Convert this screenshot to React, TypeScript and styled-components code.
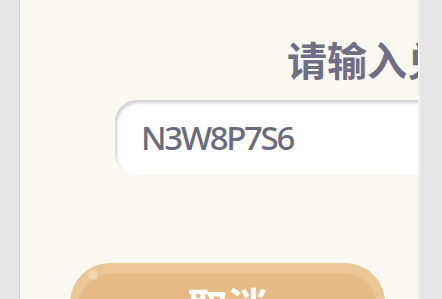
import React from "react";
import styled, { createGlobalStyle } from "styled-components";

const GlobalStyle = createGlobalStyle`
  html, body {
    margin: 0;
    padding: 0;
    background: #e6e6e6;
    overflow: hidden;
  }
`;

const Page = styled.div`
  display: flex;
  width: 442px;
  height: 299px;
  padding-left: 20px;
  box-sizing: border-box;
`;

const Panel = styled.div`
  display: flex;
  flex-direction: column;
  width: 398px;
  height: 299px;
  background: #fbf7f1;
  border-right: 2px solid #f3f1ee;
  box-shadow: -1px 0 1px rgba(0, 0, 0, 0.08);
  overflow: hidden;
`;

const Title = styled.div`
  margin-top: 39px;
  padding-left: 267px;
  font-family: "Noto Sans CJK SC", "Noto Sans", sans-serif;
  font-size: 40px;
  font-weight: 700;
  line-height: 40px;
  color: #6e6e86;
  white-space: nowrap;
`;

const CodeInput = styled.div`
  display: flex;
  align-items: center;
  flex-shrink: 0;
  margin-top: 21px;
  margin-left: 95px;
  width: 420px;
  height: 75px;
  padding-left: 26px;
  box-sizing: border-box;
  background: #ffffff;
  border-radius: 22px;
  box-shadow: inset 2px 3px 3px rgba(0, 0, 0, 0.18);
  font-family: "Noto Sans", "Open Sans", sans-serif;
  font-size: 33px;
  font-weight: 500;
  letter-spacing: -2.3px;
  color: #6b6b80;
`;

const CancelButton = styled.div`
  position: relative;
  flex-shrink: 0;
  margin-top: 88px;
  margin-left: 50px;
  width: 315px;
  height: 80px;
  padding: 10px 8px 0;
  box-sizing: border-box;
  background: #ebc797;
  border-radius: 40px;
`;

const ButtonFace = styled.div`
  display: flex;
  justify-content: center;
  height: 100%;
  padding-top: 12px;
  box-sizing: border-box;
  background: #e6bb86;
  border-radius: 34px 34px 0 0;
  font-family: "Noto Sans CJK SC", "Noto Sans", sans-serif;
  font-size: 40px;
  font-weight: 700;
  line-height: 40px;
  color: #ffffff;
`;

const Shine = styled.span`
  position: absolute;
  left: 18px;
  top: 7px;
  width: 10px;
  height: 10px;
  border-radius: 50%;
  background: #f1d4aa;
`;

export default function App() {
  return (
    <>
      <GlobalStyle />
      <Page>
        <Panel>
          <Title>请输入兑换码</Title>
          <CodeInput>N3W8P7S6</CodeInput>
          <CancelButton>
            <Shine />
            <ButtonFace>取消</ButtonFace>
          </CancelButton>
        </Panel>
      </Page>
    </>
  );
}
